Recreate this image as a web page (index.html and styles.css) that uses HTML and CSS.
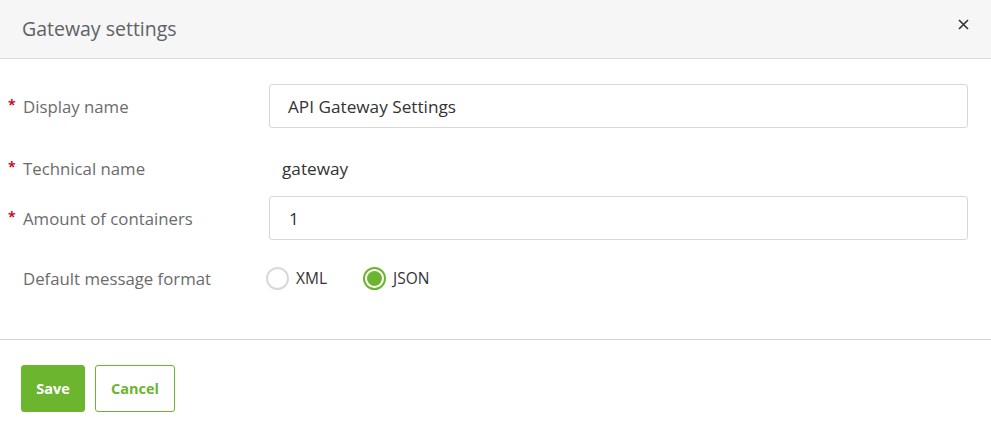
FILE: index.html
```html
<!DOCTYPE html>
<html>
<head>
<meta charset="utf-8">
<link rel="stylesheet" href="styles.css">
</head>
<body>
<div class="dialog">
  <div class="header">
    <div class="title">Gateway settings</div>
    <button class="close" aria-label="Close">
      <svg width="11" height="11" viewBox="0 0 11 11"><path d="M1 1L10 10M10 1L1 10" stroke="#333" stroke-width="1.6" fill="none"/></svg>
    </button>
  </div>
  <div class="body">
    <div class="row row1">
      <div class="label"><span class="req">*</span>Display name</div>
      <div class="field"><div class="input">API Gateway Settings</div></div>
    </div>
    <div class="row row2">
      <div class="label"><span class="req">*</span>Technical name</div>
      <div class="field"><div class="static">gateway</div></div>
    </div>
    <div class="row row3">
      <div class="label"><span class="req">*</span>Amount of containers</div>
      <div class="field"><div class="input num">1</div></div>
    </div>
    <div class="row row4">
      <div class="label"><span class="req"></span>Default message format</div>
      <div class="field radios">
        <label class="radio"><span class="circle"></span>XML</label>
        <label class="radio checked"><span class="circle"><span class="dot"></span></span>JSON</label>
      </div>
    </div>
  </div>
  <div class="footer">
    <button class="btn save">Save</button>
    <button class="btn cancel">Cancel</button>
  </div>
</div>
</body>
</html>
```
FILE: styles.css
```css
html, body {
  margin: 0;
  padding: 0;
  background: #fff;
  font-family: "Open Sans", "Noto Sans", sans-serif;
}
.dialog {
  width: 991px;
}
.header {
  height: 58px;
  background: #f6f6f6;
  border-bottom: 1px solid #dcdcdc;
  display: flex;
  align-items: center;
  justify-content: space-between;
  padding: 0 22px 0 22px;
  box-sizing: content-box;
}
.title {
  font-size: 19.5px;
  color: #5f6266;
  margin-top: -2px;
}
.close {
  border: 0;
  background: transparent;
  padding: 0;
  width: 11px;
  height: 11px;
  margin-top: -10px;
  display: flex;
}
.body {
  display: flow-root;
  box-sizing: border-box;
  padding: 0 23px 0 8px;
  height: 281px;
  border-bottom: 1px solid #d6d6d6;
}
.row {
  display: flex;
  align-items: center;
}
.row1 { margin-top: 25px; height: 44px; }
.row2 { margin-top: 20px; height: 40px; }
.row3 { margin-top: 8px; height: 44px; }
.row4 { margin-top: 18px; height: 40px; }
.label {
  width: 261px;
  flex: none;
  font-size: 16.8px;
  color: #6b6b6b;
  display: flex;
  align-items: center;
}
.req {
  display: inline-block;
  width: 15px;
  color: #c8102e;
  font-weight: 700;
  font-size: 14px;
  margin-top: -3px;
}
.field {
  flex: 1;
}
.input {
  height: 44px;
  box-sizing: border-box;
  border: 1px solid #d7d7d7;
  border-radius: 3px;
  padding: 0 18px;
  display: flex;
  align-items: center;
  font-size: 17.2px;
  color: #333;
}
.input.num { padding-left: 19px; }
.static {
  padding-left: 13px;
  font-size: 17.2px;
  color: #333;
}
.radios {
  display: flex;
  align-items: center;
  gap: 36px;
  margin-left: -3px;
}
.radio {
  display: flex;
  align-items: center;
  font-size: 15.5px;
  color: #333;
  gap: 7px;
}
.circle {
  width: 23px;
  height: 23px;
  box-sizing: border-box;
  border: 2px solid #d9d9d9;
  border-radius: 50%;
  display: flex;
  align-items: center;
  justify-content: center;
}
.radio.checked .circle {
  border-color: #6bb52f;
}
.dot {
  width: 15px;
  height: 15px;
  border-radius: 50%;
  background: #6bb52f;
}
.footer {
  display: flex;
  gap: 10px;
  padding: 25px 21px 0;
}
.btn {
  height: 47px;
  border-radius: 3px;
  font-family: inherit;
  font-size: 14.5px;
  font-weight: 700;
  cursor: pointer;
}
.save {
  width: 64px;
  background: #6bb52f;
  border: 1px solid #6bb52f;
  color: #fff;
}
.cancel {
  width: 80px;
  background: #fff;
  border: 1px solid #6bb52f;
  color: #6bb52f;
}
```
